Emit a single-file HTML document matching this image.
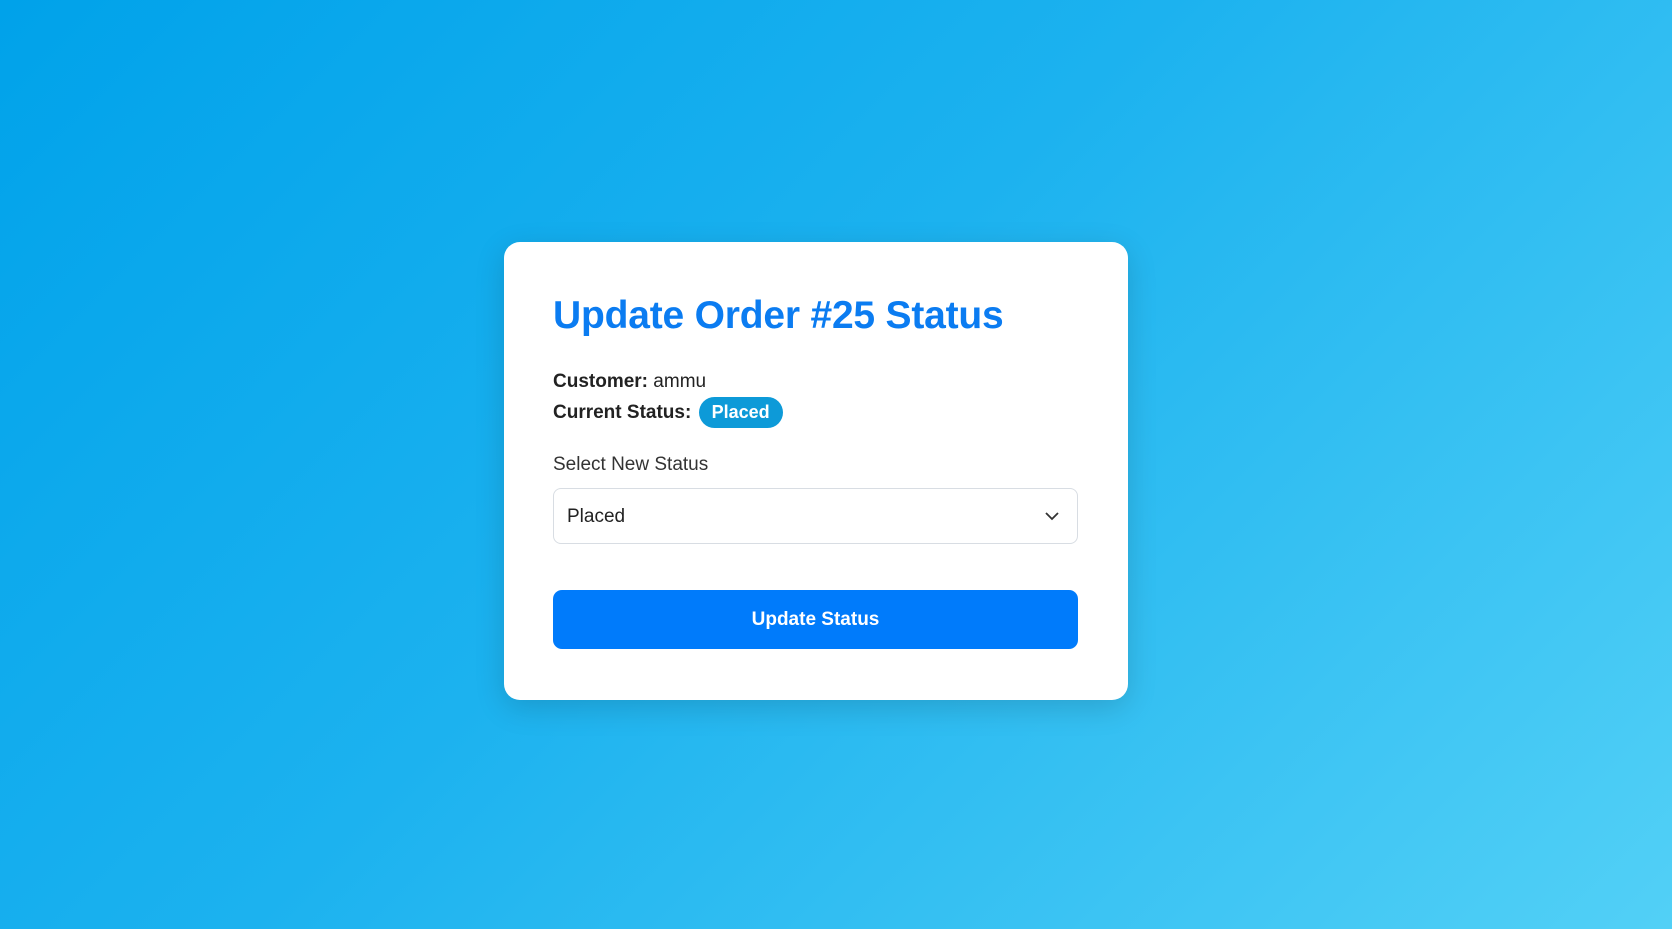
<!DOCTYPE html>
<html><head><meta charset="utf-8"><style>
html,body{margin:0;padding:0;width:1672px;height:929px;overflow:hidden}
body{background:linear-gradient(135deg,#00a2ea 0%,#1cb2ef 45%,#52d0f6 100%);font-family:"Liberation Sans",sans-serif;position:relative}
.card{position:absolute;left:504px;top:242px;width:624px;height:458px;background:#fff;border-radius:16px;box-shadow:0 8px 30px rgba(0,0,0,.15)}
.t{position:absolute;left:49px;top:52px;margin:0;font-size:39px;font-weight:bold;color:#0b7cf1;letter-spacing:-0.2px;white-space:nowrap}
.l1{position:absolute;left:49px;top:129px;font-size:19px;color:#222}
.l2{position:absolute;left:49px;top:155px;font-size:19px;color:#222}
.badge{display:inline-block;background:#0d9ad8;color:#fff;font-weight:bold;border-radius:16px;padding:5px 13px;margin-left:2px;font-size:18px}
.lab{position:absolute;left:49px;top:212px;font-size:19px;color:#333}
.sel{position:absolute;left:49px;top:246px;width:525px;height:56px;border:1px solid #d8dde3;border-radius:8px;font-size:19px;color:#222;line-height:56px;box-sizing:border-box;padding-left:13px}
.sel svg{position:absolute;right:18px;top:22px}
.btn{position:absolute;left:49px;top:348px;width:525px;height:59px;background:#007bfb;border-radius:9px;color:#fff;font-size:19px;font-weight:bold;text-align:center;line-height:59px}
</style></head><body>
<div class="card">
<div class="t">Update Order #25 Status</div>
<div class="l1"><b>Customer:</b> ammu</div>
<div class="l2"><b>Current Status:</b> <span class="badge">Placed</span></div>
<div class="lab">Select New Status</div>
<div class="sel">Placed<svg width="14" height="10" viewBox="0 0 14 10"><path d="M1 2l6 6 6-6" fill="none" stroke="#333" stroke-width="1.8"/></svg></div>
<div class="btn">Update Status</div>
</div>
</body></html>
